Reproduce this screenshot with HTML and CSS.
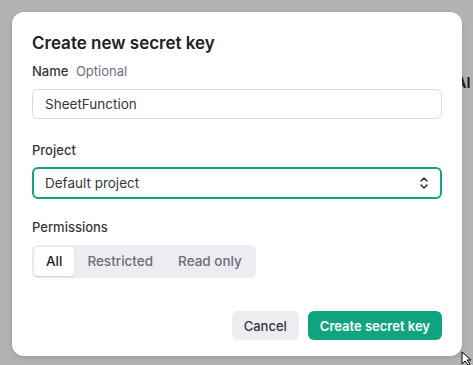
FILE: index.html
```html
<!DOCTYPE html>
<html lang="en">
<head>
    <meta charset="UTF-8">
    <meta name="viewport" content="width=device-width, initial-scale=1.0">
    <title>Create new secret key</title>
    <link rel="stylesheet" href="styles.css">
</head>
<body>
    <div class="backdrop">
        <span class="behind">AI</span>
        <div class="modal">
            <h2 class="title">Create new secret key</h2>

            <div class="field">
                <label class="label">Name <span class="hint">Optional</span></label>
                <div class="input">SheetFunction</div>
            </div>

            <div class="field project">
                <label class="label">Project</label>
                <div class="select">
                    <span>Default project</span>
                    <svg class="chevron" width="12" height="14" viewBox="0 0 12 14" fill="none" stroke="#353740" stroke-width="1.6" stroke-linecap="round" stroke-linejoin="round">
                        <path d="M3 5l3-3 3 3"/>
                        <path d="M3 9l3 3 3-3"/>
                    </svg>
                </div>
            </div>

            <div class="field">
                <label class="label">Permissions</label>
                <div class="segments">
                    <div class="seg active">All</div>
                    <div class="seg">Restricted</div>
                    <div class="seg">Read only</div>
                </div>
            </div>

            <div class="actions">
                <button class="btn cancel">Cancel</button>
                <button class="btn primary">Create secret key</button>
            </div>
        </div>
        <svg class="cursor" width="14" height="14" viewBox="0 0 14 14">
            <path d="M1 1v12l3-3 3 4 2-1-3-4h4z" fill="#fff" stroke="#000" stroke-width="1"/>
        </svg>
    </div>
</body>
</html>
```

FILE: styles.css
```css
* {
    margin: 0;
    padding: 0;
    box-sizing: border-box;
}
body {
    background: #b3b3b3;
    font-family: Inter, "Noto Sans", sans-serif;
    color: #202123;
}
.backdrop {
    position: relative;
    width: 473px;
    height: 365px;
    padding: 12px;
    overflow: hidden;
}
.behind {
    position: absolute;
    left: 456px;
    top: 74px;
    font-weight: 700;
    font-size: 14px;
    color: #1f1f1f;
}
.modal {
    position: relative;
    width: 450px;
    height: 344px;
    background: #fff;
    border-radius: 12px;
    padding: 20px 20px 16px 20px;
    display: flex;
    flex-direction: column;
    box-shadow: 0 2px 6px rgba(0, 0, 0, 0.12);
}
.title {
    font-size: 17px;
    font-weight: 600;
    line-height: 22px;
    margin-bottom: 8px;
    color: #202123;
}
.field {
    display: flex;
    flex-direction: column;
    margin-bottom: 22px;
}
.field.project {
    margin-bottom: 19px;
}
.project .label {
    margin-bottom: 8px;
}
.label {
    font-size: 13px;
    font-weight: 500;
    line-height: 18px;
    margin-bottom: 9px;
    color: #353740;
}
.hint {
    font-weight: 400;
    color: #6e6e80;
    margin-left: 4px;
}
.input {
    height: 30px;
    width: 410px;
    border: 1px solid #d9d9e3;
    border-radius: 6px;
    padding: 0 12px;
    font-size: 13.5px;
    line-height: 28px;
    color: #353740;
}
.select {
    height: 32px;
    width: 410px;
    border: 2px solid #10a37f;
    border-radius: 6px;
    padding: 0 10px 0 11px;
    font-size: 13.5px;
    display: flex;
    align-items: center;
    justify-content: space-between;
    color: #353740;
}
.segments {
    display: flex;
    align-self: flex-start;
    background: #ececf1;
    border-radius: 6px;
    padding: 2px;
    gap: 1px;
}
.seg {
    font-size: 13.5px;
    font-weight: 500;
    color: #6e6e80;
    padding: 0 12px;
    line-height: 29px;
    border-radius: 4px;
}
.seg.active {
    background: #fff;
    color: #202123;
    box-shadow: 0 1px 2px rgba(0, 0, 0, 0.12);
}
.actions {
    margin-top: auto;
    display: flex;
    justify-content: flex-end;
    gap: 9px;
}
.btn {
    border: none;
    border-radius: 6px;
    font-family: inherit;
    font-size: 13px;
    font-weight: 500;
    height: 29px;
    padding: 0 12px;
}
.cancel {
    background: #ececf1;
    color: #353740;
}
.primary {
    background: #10a37f;
    color: #fff;
    font-weight: 600;
}
.cursor {
    position: absolute;
    left: 461px;
    top: 351px;
}
```
